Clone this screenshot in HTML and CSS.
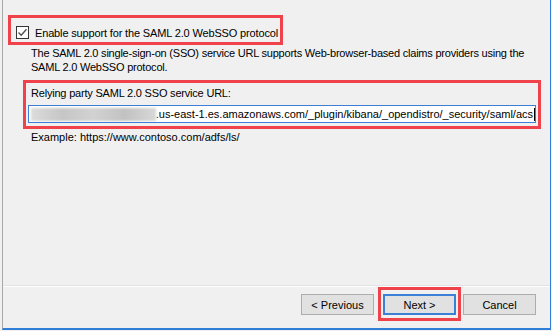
FILE: index.html
```html
<!DOCTYPE html>
<html lang="en">
<head>
    <meta charset="UTF-8">
    <title>Configure URL</title>
    <link rel="stylesheet" href="styles.css">
</head>
<body>
    <div class="window">
        <div class="content">
            <div class="mark check-mark">
                <label class="check-row">
                    <span class="checkbox">
                        <svg width="11" height="11" viewBox="0 0 11 11"><path d="M1.5 5.5 L4.2 8.2 L9.5 2.2" fill="none" stroke="#4d4d4d" stroke-width="1.3"/></svg>
                    </span>
                    <span class="check-text">Enable support for the SAML 2.0 WebSSO protocol</span>
                </label>
            </div>

            <p class="desc">The SAML 2.0 single-sign-on (SSO) service URL supports Web-browser-based claims providers using the SAML 2.0 WebSSO protocol.</p>

            <div class="mark url-mark">
                <div class="field-label">Relying party SAML 2.0 SSO service URL:</div>
                <div class="url-box">
                    <span class="blurred"></span><span class="url-text">.us-east-1.es.amazonaws.com/_plugin/kibana/_opendistro/_security/saml/acs</span><span class="caret"></span>
                </div>
            </div>

            <div class="example">Example: https://www.contoso.com/adfs/ls/</div>
        </div>

        <div class="footer">
            <button class="btn">&lt; Previous</button>
            <div class="mark next-mark">
                <button class="btn btn-default">Next &gt;</button>
            </div>
            <button class="btn">Cancel</button>
        </div>
    </div>
</body>
</html>
```

FILE: styles.css
```css
html, body {
    margin: 0;
    padding: 0;
}
body {
    font-family: "Liberation Sans", Arial, sans-serif;
    font-size: 11px;
    color: #000000;
    background: #f0f0f0;
    width: 552px;
    height: 331px;
    overflow: hidden;
}
.window {
    box-sizing: border-box;
    margin-left: 2px;
    width: 549px;
    height: 330px;
    border-left: 1px solid #a9a9a9;
    border-right: 1px solid #2f7fd8;
    border-bottom: 2px solid #2f7fd8;
    display: flex;
    flex-direction: column;
}
.content {
    flex: 1;
    padding: 15px 0 0 5px;
    border-bottom: 1px solid #e2e2e2;
    box-shadow: 0 1px 0 #ffffff;
}
.mark {
    border: 3px solid #f0424a;
    box-sizing: border-box;
}
.check-mark {
    width: 275px;
    height: 30px;
    padding: 8px 0 0 5px;
}
.check-row {
    display: flex;
    align-items: center;
    gap: 6px;
    white-space: nowrap;
}
.check-text {
    letter-spacing: -0.15px;
}
.checkbox {
    width: 11px;
    height: 11px;
    flex: none;
    border: 1px solid #333333;
    background: #ffffff;
    display: flex;
    align-items: center;
    justify-content: center;
}
.desc {
    margin: 1px 0 0 23px;
    width: 510px;
    line-height: 14px;
    letter-spacing: -0.22px;
}
.url-mark {
    margin: 6px 0 0 15px;
    width: 518px;
    height: 49px;
    padding: 3px 0 0 2px;
}
.field-label {
    margin-left: 3px;
    line-height: 14px;
    letter-spacing: -0.2px;
}
.url-box {
    margin-top: 5px;
    width: 508px;
    height: 18px;
    box-sizing: border-box;
    border: 1px solid #3f7ed6;
    background: #ffffff;
    display: flex;
    align-items: center;
    padding-left: 2px;
    white-space: nowrap;
    overflow: hidden;
}
.blurred {
    width: 128px;
    height: 13px;
    background: linear-gradient(90deg, #dcdcdc, #c6c6c6 25%, #d2d2d2 50%, #c2c2c2 75%, #d8d8d8);
    filter: blur(1px);
}
.caret {
    width: 1px;
    height: 13px;
    background: #000000;
    margin-left: 1px;
}
.example {
    margin: 1px 0 0 23px;
    line-height: 14px;
}
.footer {
    height: 41px;
    display: flex;
    justify-content: flex-end;
    align-items: flex-start;
    padding: 1px 14px 0 0;
    gap: 2px;
}
.btn {
    font-family: "Liberation Sans", Arial, sans-serif;
    font-size: 11px;
    width: 73px;
    height: 21px;
    margin-top: 7px;
    background: #e1e1e1;
    border: 1px solid #adadad;
    color: #000000;
    padding: 0;
}
.next-mark {
    margin-left: 2px;
    padding: 4px 2px 3px 2px;
}
.next-mark .btn {
    margin-top: 0;
    width: 73px;
}
.btn-default {
    border: 2px solid #3c7fd6;
}
```
